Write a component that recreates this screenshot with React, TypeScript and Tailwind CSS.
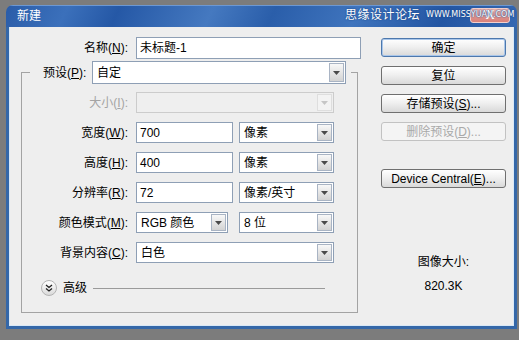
import React from 'react';
import { clsx, type ClassValue } from 'clsx';
import { twMerge } from 'tailwind-merge';

function cn(...inputs: ClassValue[]) {
  return twMerge(clsx(inputs));
}

const DropArrow: React.FC<{ disabled?: boolean }> = ({ disabled }) => (
  <div
    className={cn(
      'w-[15px] flex items-center justify-center border',
      disabled
        ? 'border-[#dedede] bg-[#f3f3f3]'
        : 'border-[#a9b4c4] bg-[linear-gradient(#f8f8f8,#d3d3d3)]'
    )}
  >
    <svg width="7" height="4" viewBox="0 0 7 4">
      <path d="M0 0h7L3.5 4z" fill={disabled ? '#c6c6c6' : '#4a4a4a'} />
    </svg>
  </div>
);

const Select: React.FC<{ value?: string; className?: string; disabled?: boolean }> = ({
  value,
  className,
  disabled,
}) => (
  <div
    className={cn(
      'h-[21px] flex items-stretch p-[1px] border',
      disabled ? 'border-[#cccccc] bg-[#efefef]' : 'border-[#8e9fb5] bg-white',
      className
    )}
  >
    <span className="flex-1 pl-[3px] flex items-center whitespace-nowrap">{value}</span>
    <DropArrow disabled={disabled} />
  </div>
);

const Input: React.FC<{ value: string; className?: string }> = ({ value, className }) => (
  <div className={cn('h-[21px] flex items-center pl-[3px] border border-[#8e9fb5] bg-white', className)}>
    {value}
  </div>
);

const Row: React.FC<{ label: React.ReactNode; disabled?: boolean; children: React.ReactNode }> = ({
  label,
  disabled,
  children,
}) => (
  <div className="flex items-center h-[21px]">
    <div className={cn('w-[106px] text-right whitespace-nowrap', disabled && 'text-[#a4a4a4]')}>{label}</div>
    <div className="ml-[8px] flex items-center">{children}</div>
  </div>
);

const Button: React.FC<{ children: React.ReactNode; primary?: boolean; disabled?: boolean; className?: string }> = ({
  children,
  primary,
  disabled,
  className,
}) => (
  <div
    className={cn(
      'h-[19px] w-[125px] flex items-center justify-center rounded-[3px] border whitespace-nowrap',
      disabled
        ? 'border-[#c2c2c2] bg-[#f4f4f4] text-[#a9a9a9]'
        : 'border-[#6f6f6f] bg-[linear-gradient(#ffffff,#f0f0f0_45%,#d9d9d9)]',
      primary && 'border-[#4d78ad] shadow-[inset_0_0_0_1px_#a9c6ea]',
      className
    )}
  >
    {children}
  </div>
);

export default function App() {
  return (
    <div className="w-[519px] h-[340px] bg-[#7c7c7c] pt-[5px] pl-[6px] text-[12px] leading-[14px] text-black font-['Liberation_Sans','Noto_Sans_CJK_SC',sans-serif]">
      <div className="w-[511px] h-[324px] flex flex-col rounded-t-[7px] overflow-hidden">
        {/* Title bar */}
        <div className="relative h-[22px] flex items-center bg-[linear-gradient(115deg,#2a5ca8_0%,#3b70bb_12%,#2558a6_22%,#4579c0_40%,#2a5eaa_52%,#3f74bd_68%,#2356a3_85%,#3568b2_100%)] shadow-[inset_0_1px_0_#6d98d2]">
          <span className="pl-[11px] text-white">新建</span>
          <div className="flex-1" />
          <div className="mr-[7px] mt-[-2px] w-[40px] h-[15px] rounded-[3px] border border-[#f4d0cc] bg-[linear-gradient(#eab0aa,#d98079)] flex items-center justify-center text-white text-[13px] font-bold">
            X
          </div>
          <div className="absolute left-[339px] top-[3px] flex items-center gap-[6px] whitespace-nowrap text-white [text-shadow:0_0_2px_#1b4a8e,0_0_1px_#1b4a8e]">
            <span className="text-[12px] leading-[14px] tracking-[0.5px]">思缘设计论坛</span>
            <span className="text-[8px] leading-[12px] font-['DejaVu_Sans',sans-serif]">WWW.MISSYUAN.COM</span>
          </div>
        </div>

        {/* Body */}
        <div className="flex-1 flex bg-[#eeeeee] border-x-[3px] border-b-[3px] border-[#3467a8] shadow-[inset_1px_0_0_#d9e8f6,inset_-1px_0_0_#d9e8f6,inset_0_-1px_0_#d9e8f6]">
          {/* Left */}
          <div className="pl-[12px] pt-[10px] flex flex-col">
            <div className="flex items-center h-[22px]">
              <div className="w-[107px] text-right">
                名称(<u>N</u>):
              </div>
              <Input value="未标题-1" className="ml-[8px] w-[225px] h-[22px]" />
            </div>

            <div className="mt-[13px] w-[337px] h-[241px] border border-[#a3a3a3] flex flex-col">
              <div className="-mt-[12px] ml-[8px] w-[321px] flex items-center bg-[#eeeeee] pl-[13px]">
                <span className="w-[49px] whitespace-nowrap">
                  预设(<u>P</u>):
                </span>
                <Select value="自定" className="w-[254px] h-[23px]" />
              </div>

              <div className="mt-[8px] flex flex-col gap-[9px]">
                <Row label={<>大小(<u>I</u>):</>} disabled>
                  <Select disabled className="w-[198px]" />
                </Row>
                <Row label={<>宽度(<u>W</u>):</>}>
                  <Input value="700" className="w-[97px]" />
                  <Select value="像素" className="ml-[6px] w-[95px]" />
                </Row>
                <Row label={<>高度(<u>H</u>):</>}>
                  <Input value="400" className="w-[97px]" />
                  <Select value="像素" className="ml-[6px] w-[95px]" />
                </Row>
                <Row label={<>分辨率(<u>R</u>):</>}>
                  <Input value="72" className="w-[97px]" />
                  <Select value="像素/英寸" className="ml-[6px] w-[95px]" />
                </Row>
                <Row label={<>颜色模式(<u>M</u>):</>}>
                  <Select value="RGB 颜色" className="w-[92px]" />
                  <Select value="8 位" className="ml-[11px] w-[95px]" />
                </Row>
                <Row label={<>背景内容(<u>C</u>):</>}>
                  <Select value="白色" className="w-[198px]" />
                </Row>
              </div>

              <div className="mt-[17px] ml-[19px] mr-[32px] flex items-center">
                <div className="w-[16px] h-[16px] rounded-full border border-[#b3b3b3] bg-[linear-gradient(#ffffff,#dadada)] flex items-center justify-center">
                  <svg width="8" height="8" viewBox="0 0 8 8">
                    <path d="M1 1l3 2.5L7 1M1 4.5l3 2.5L7 4.5" fill="none" stroke="#222" strokeWidth="1.3" />
                  </svg>
                </div>
                <span className="ml-[6px]">高级</span>
                <div className="ml-[6px] flex-1 h-px bg-[#9a9a9a]" />
              </div>
            </div>
          </div>

          {/* Right */}
          <div className="ml-[20px] pt-[11px] flex flex-col items-center w-[125px]">
            <Button primary>确定</Button>
            <Button className="mt-[9px]">复位</Button>
            <Button className="mt-[9px]">
              存储预设(<u>S</u>)...
            </Button>
            <Button disabled className="mt-[9px]">
              删除预设(<u>D</u>)...
            </Button>
            <Button className="mt-[28px]">
              Device Central(<u>E</u>)...
            </Button>
            <div className="mt-[67px]">图像大小:</div>
            <div className="mt-[10px]">820.3K</div>
          </div>
        </div>
      </div>
    </div>
  );
}
